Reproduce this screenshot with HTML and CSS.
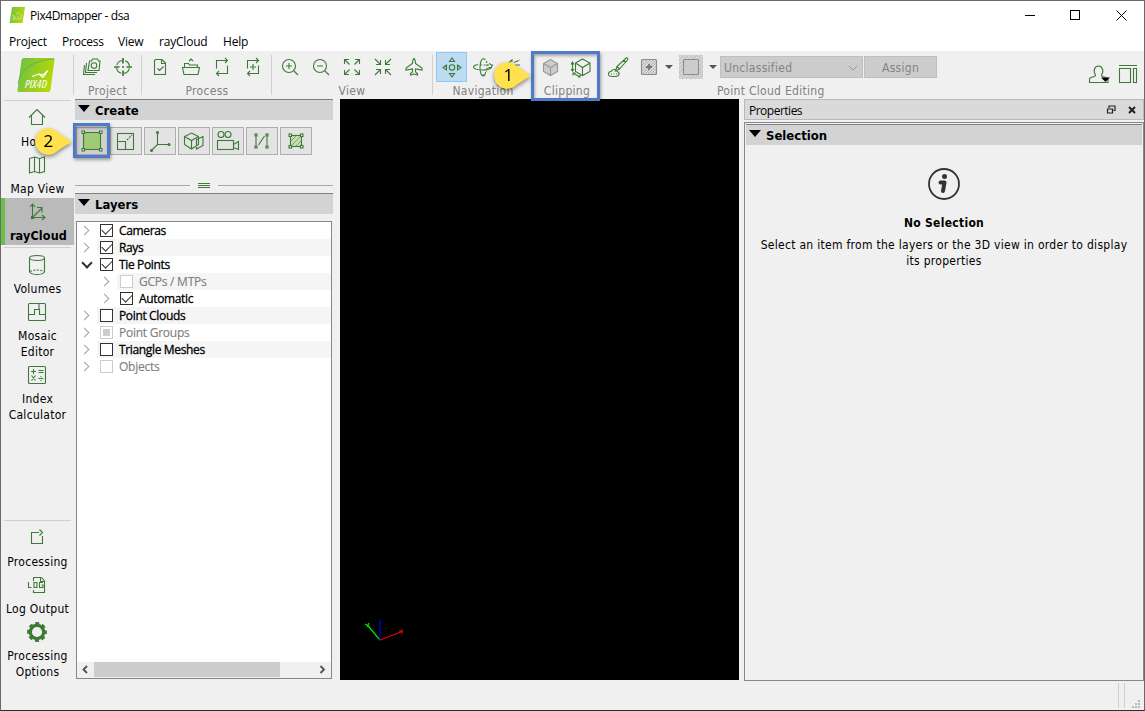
FILE: index.html
```
<!DOCTYPE html>
<html lang="en">
<head>
    <meta charset="UTF-8">
    <meta name="viewport" content="width=device-width, initial-scale=1.0">
    <title>Pix4Dmapper - dsa</title>
    <link rel="stylesheet" href="styles.css">
</head>
<body>
<div class="window">
    <header class="titlebar">
        <svg class="app-icon" width="16" height="16" viewBox="0 0 16 16">
            <defs>
                <linearGradient id="logoGreen" x1="0" y1="0" x2="1" y2="0.3">
                    <stop offset="0" stop-color="#6cbf45"/>
                    <stop offset="1" stop-color="#b5d70b"/>
                </linearGradient>
            </defs>
            <path d="M3 0H16L13.500 16H0.500Z" fill="url(#logoGreen)"/>
            <path d="M3 8.500h1.500v3.500M6 9v3M8 9l2 3M12 7v5M3 12h9M7 7l4-2" stroke="#d8eeb0" stroke-width="0.600" fill="none"/>
        </svg>
        <span class="window-title">Pix4Dmapper - dsa</span>
        <div class="window-buttons">
            <svg width="46" height="29" viewBox="0 0 46 29"><path d="M18 14.500h10"/></svg>
            <svg width="46" height="29" viewBox="0 0 46 29"><rect x="17.500" y="9.500" width="9" height="9"/></svg>
            <svg width="46" height="29" viewBox="0 0 46 29"><path d="M17.500 9.500l10 10M27.500 9.500l-10 10"/></svg>
        </div>
    </header>

    <nav class="menubar">
        <span class="menu-project">Project</span>
        <span class="menu-process">Process</span>
        <span class="menu-view">View</span>
        <span class="menu-raycloud">rayCloud</span>
        <span>Help</span>
    </nav>

    <div class="toolbar">
        <div class="logo">
            <svg width="40" height="36" viewBox="0 0 40 36">
                <path d="M8 1H37Q39 1 38.500 3L34.500 33Q34 35 32 35H3Q1 35 1.500 33L5.500 3Q6 1 8 1Z" fill="url(#logoGreen)"/>
                <path d="M2 27C4 13 17 3 38 2" stroke="#49a05c" stroke-width="0.600" fill="none"/>
                <path d="M16 19.500L23 17L27 18L32 13.500L27 20.500M23 17L27 20.500" stroke="#fff" stroke-width="1.100" fill="none"/>
                <text x="9" y="30.500" class="logo-text" textLength="22" lengthAdjust="spacingAndGlyphs">PIX4D</text>
            </svg>
        </div>

        <div class="tool-group group-project">
            <div class="tools">
                <div class="tool"><svg class="icon" viewBox="0 0 24 24"><path d="M9.500 6h2l1-2h5l1 2h1.500l-1 9.500h-11zM6.500 8l-1 9.500h11.500M4.500 10l-1 9.500h11.500"/><circle cx="14" cy="10.500" r="2.800"/></svg></div>
                <div class="tool"><svg class="icon" viewBox="0 0 24 24"><circle cx="12" cy="12" r="6.500" stroke-dasharray="7.200 3.010" stroke-dashoffset="-1.500"/><path d="M12 3v5.500M12 15.500v5.500M3 12h5.500M15.500 12h5.500M11 12h2" stroke-width="1.700"/></svg></div>
            </div>
            <div class="tool-label">Project</div>
        </div>

        <div class="tool-group group-process">
            <div class="tools">
                <div class="tool"><svg class="icon" viewBox="0 0 24 24"><path d="M7.500 4.500h6.500l3.500 3.500v11.500h-11v-14zM13.500 4.500v4h4M9.500 13.500l2 2 4-4"/></svg></div>
                <div class="tool"><svg class="icon" viewBox="0 0 24 24"><path d="M3.500 12.500h17l-1.500 7h-14zM5.500 12v-3.500h4l1 1.500h8v2M10 6l2-2 2 2"/></svg></div>
                <div class="tool"><svg class="icon" viewBox="0 0 24 24"><path d="M6.500 13.500v-8h11M15 3l2.500 2.500-2.500 2.500M17.500 10.500v8h-11M9 16l-2.500 2.500 2.500 2.500"/></svg></div>
                <div class="tool"><svg class="icon" viewBox="0 0 24 24"><path d="M6.500 13.500v-8h11M15 3l2.500 2.500-2.500 2.500M17.500 10.500v8h-11M9 16l-2.500 2.500 2.500 2.500M12 9v6M9 12h6"/></svg></div>
            </div>
            <div class="tool-label">Process</div>
        </div>

        <div class="tool-group group-view">
            <div class="tools">
                <div class="tool"><svg class="icon" viewBox="0 0 24 24"><circle cx="11" cy="11" r="6.500"/><path d="M16 16l4 4M8 11h6M11 8v6"/></svg></div>
                <div class="tool"><svg class="icon" viewBox="0 0 24 24"><circle cx="11" cy="11" r="6.500"/><path d="M16 16l4 4M8 11h6"/></svg></div>
                <div class="tool"><svg class="icon" viewBox="0 0 24 24"><path d="M9 4.500H4.500V9M15 4.500h4.500V9M9 19.500H4.500V15M15 19.500h4.500V15M4.500 4.500l5 5M19.500 4.500l-5 5M4.500 19.500l5-5M19.500 19.500l-5-5"/></svg></div>
                <div class="tool"><svg class="icon" viewBox="0 0 24 24"><path d="M5 9.500h4.500V5M19 9.500h-4.500V5M5 14.500h4.500V19M19 14.500h-4.500V19M4 4l5.500 5.500M20 4l-5.500 5.500M4 20l5.500-5.500M20 20l-5.500-5.500"/></svg></div>
                <div class="tool"><svg class="icon" viewBox="0 0 24 24"><path d="M12 3.500q1.500 1 1.500 5l6.500 4.500v2l-6.500-1v3l2 1.500v1.500l-3.500-1-3.500 1v-1.500l2-1.500v-3l-6.500 1v-2l6.500-4.500q0-4 1.500-5z"/></svg></div>
            </div>
            <div class="tool-label">View</div>
        </div>

        <div class="tool-group group-navigation">
            <div class="tools">
                <div class="tool active"><svg class="icon" viewBox="0 0 24 24"><circle cx="12" cy="12.500" r="2.700"/><path d="M9.500 6.500h5l-2.500-3.500zM9.500 18.500h5l-2.500 3.500zM6.500 10v5l-3.500-2.500zM17.500 10v5l3.500-2.500z"/></svg></div>
                <div class="tool"><svg class="icon" viewBox="0 0 24 24"><path d="M7 9.500q-5 1-4.500 3 2 2.500 9 2.500 6 0 9-2.500M18 8.500q4 1.500 2.500 4l-3 0M20.500 12.500l1-3M14.500 5q-2.500-3-4.500 1-2 6.500 0 13 2 3.500 4 1M14 20l.5-3M14 20l-3 0"/><path d="M9 10h9M15.500 6q1 5 0 11" stroke-dasharray="2 1.500"/></svg></div>
                <div class="tool"><svg class="icon" viewBox="0 0 24 24"><path d="M3 10.500l7-5.500v6.500zM8 7q-1.500 2 0 4M12 7.500l6-2.500M13 10h5M12 12l6 2.500" stroke-dasharray="5 1"/></svg></div>
            </div>
            <div class="tool-label">Navigation</div>
        </div>

        <div class="tool-group group-clipping">
            <div class="tools">
                <div class="tool"><svg class="icon" viewBox="0 0 24 24"><path d="M11.500 4.500l7 4v8l-7 4-7-4v-8z" fill="#ccc" stroke="#999"/><path d="M4.500 8.500l7 4 7-4M11.500 12.500v8" stroke="#999"/></svg></div>
                <div class="tool"><svg class="icon" viewBox="0 0 24 24"><path d="M12.500 4l7.500 4v8.500l-7.500 4-7-4V8zM5.500 8l7 4.500L20 8M12.500 12.500v8M2.500 7.500v8M1 9.500l1.500-2.500 1.500 2.500M1 14l1.500 2 1.500-2M3 18l7 4M3 20.500v-2.500h2.500M8 22h2v-2"/></svg></div>
            </div>
            <div class="tool-label">Clipping</div>
            <div class="highlight highlight-clipping"></div>
            <svg class="callout callout-one" width="44" height="36" viewBox="0 0 44 36">
                <path d="M26 8.500A13.200 13.200 0 1 0 26 26.500L40 17.500Z"/>
                <text x="17.500" y="22.500">1</text>
            </svg>
        </div>

        <div class="tool-group group-editing">
            <div class="tools">
                <div class="tool brush"><svg class="icon" viewBox="0 0 24 24"><path d="M11 11.500l2.500 2.500 8-9q1-2.500-1.500-2zM11 11.500l-1.500 4.500 4-2M17.500 5l2.500 2.500M6 21.500q-3.500 0-3.500-2.500t2.500-2.500q1-2 3.500-2t2.500 2q2.500.5 2 3-.5 2-3 2zM5 19h1M7.500 19h1M10 19h1"/></svg></div>
                <div class="tool add-points"><svg class="icon gray" viewBox="0 0 24 24">
                    <defs><pattern id="hatch" width="3" height="3" patternUnits="userSpaceOnUse"><rect width="3" height="3" fill="#dcdcdc" stroke="none"/><path d="M0 3L3 0" stroke="#aaa" stroke-width="0.900"/></pattern></defs>
                    <rect x="4.500" y="4.500" width="15" height="15" rx="1" fill="url(#hatch)"/><path d="M12 9v6M9 12h6" stroke-width="1.800" stroke="#777"/></svg></div>
                <span class="arrow"></span>
                <div class="tool square-select"><svg class="icon gray" viewBox="0 0 24 24"><rect x="4.500" y="4.500" width="15" height="15" rx="1" fill="#ccc"/></svg></div>
                <span class="arrow"></span>
                <div class="combo"><span>Unclassified</span><svg width="10" height="6" viewBox="0 0 10 6"><path d="M1 1l4 4 4-4"/></svg></div>
                <button class="assign" disabled>Assign</button>
            </div>
            <div class="tool-label">Point Cloud Editing</div>
        </div>

        <div class="toolbar-right">
            <svg class="icon" width="24" height="24" viewBox="0 0 24 24"><path d="M2.500 20.500v-3q0-2 3-2.500 3-.5 3-2-2-2.500-1-6 1-3 4-3t4 3q1 3.500-1 6 0 1.500 3 2 3.500.5 3.500 3v2.500z"/><path d="M14 15.500h9l-4.500 4.500z" fill="#000" stroke="none"/></svg>
            <svg class="icon" width="24" height="24" viewBox="0 0 24 24"><path d="M3 3.500h18M3.500 6.500h11v14h-11zM17.500 6.500h3v14h-3z"/></svg>
        </div>
    </div>

    <div class="main">
        <aside class="sidebar">
            <div class="side-line"></div>
            <div class="side-item home"><svg class="icon" viewBox="0 0 24 24"><path d="M4 11.500l8-8 8 8M6.500 9.500v9h11v-9"/></svg>Home</div>
            <div class="side-item"><svg class="icon" viewBox="0 0 24 24"><path d="M4.500 5.500l5-1.500 5 1.500 5-1.500v14.500l-5 1.500-5-1.500-5 1.500zM9.500 4v14.500M14.500 5.500v14.500"/></svg>Map View</div>
            <div class="side-item selected"><svg class="icon" viewBox="0 0 24 24"><path d="M7.500 4v13.500h12M5 7l2.500-3 2.500 3M17 15l3 2.500-3 2.500M9 16l7.500-7.500M12 7.500h5v5"/><rect x="6.500" y="16.500" width="2" height="2"/></svg>rayCloud</div>
            <div class="side-line inner-line"></div>
            <div class="side-item volumes"><svg class="icon" viewBox="0 0 24 24"><ellipse cx="12" cy="5" rx="7.500" ry="2.500"/><path d="M4.500 5v14q2 2.500 7.500 2.500t7.500-2.500V5"/><path d="M5 18.500q7-3 14 0" stroke-dasharray="2 1.500"/></svg>Volumes</div>
            <div class="side-item"><svg class="icon" viewBox="0 0 24 24"><rect x="3.500" y="3.500" width="17" height="17" rx="1"/><path d="M4 14.500h5.500v-5H14v-6M14.500 9v5.500h6"/></svg>Mosaic<br>Editor</div>
            <div class="side-item"><svg class="icon" viewBox="0 0 24 24"><rect x="3.500" y="3.500" width="17" height="17" rx="1"/><path d="M6 8.500h5M8.500 6v5M13.500 7.500h5M13.500 9.500h5M6.500 12.500l4 5M10.500 12.500l-4 5M13.500 15.500h5M16 13v1M16 17v1"/></svg>Index<br>Calculator</div>

            <div class="side-line bottom-line"></div>
            <div class="side-item processing"><svg class="icon" viewBox="0 0 24 24"><path d="M14 6.500H6.500v11h11V10M14.500 3.500l3 3-3 3"/></svg>Processing</div>
            <div class="side-item"><svg class="icon" viewBox="0 0 24 24"><path d="M8.500 8V4.500h8l3 3.500v11.500h-11V17M15.500 4.500v4h4M3.500 9v5.500h3M9 9.500h3v5H9zM18 9.500h-3.500v5H18v-2.500h-1.500"/></svg>Log Output</div>
            <div class="side-item"><svg class="icon" viewBox="0 0 24 24"><circle cx="12" cy="12" r="6.700" stroke-width="3.200"/><circle cx="12" cy="12" r="8.600" stroke-width="2.600" stroke-dasharray="4 2.754" stroke-dashoffset="2"/></svg>Processing<br>Options</div>
        </aside>

        <section class="left-panel">
            <div class="section-head"><span class="triangle"></span>Create</div>
            <div class="create-buttons">
                <div class="create-btn first"><svg class="icon" viewBox="0 0 24 24"><rect x="3.500" y="3.500" width="17" height="17" fill="#9fca78"/><g fill="#eee"><rect x="2" y="2" width="2.500" height="2.500"/><rect x="19.500" y="2" width="2.500" height="2.500"/><rect x="2" y="19.500" width="2.500" height="2.500"/><rect x="19.500" y="19.500" width="2.500" height="2.500"/></g></svg>
                    <div class="highlight highlight-create"></div>
                </div>
                <div class="create-btn"><svg class="icon" viewBox="0 0 24 24"><rect x="3.500" y="4.500" width="16" height="16"/><path d="M3.500 12.500h8v8"/><path d="M13 11l5-5" stroke-dasharray="2 1"/></svg></div>
                <div class="create-btn"><svg class="icon" viewBox="0 0 24 24"><path d="M9.500 3v12.500h12M9.500 15.500l-6 6"/><g fill="#3c7a35" stroke="none"><circle cx="9.500" cy="3.500" r="1.500"/><circle cx="21" cy="15.500" r="1.500"/><circle cx="3.500" cy="21.500" r="1.500"/></g></svg></div>
                <div class="create-btn"><svg class="icon" viewBox="0 0 24 24"><path d="M9.500 4l7 3.500v8l-7 4.500-7-4.500v-8zM2.500 7.500l7 4 7-4M9.500 11.500v8.500M14.500 10.500l6.500-3v9l-6.500 3.500zM18 9l3-1.500"/></svg></div>
                <div class="create-btn"><svg class="icon" viewBox="0 0 24 24"><circle cx="5" cy="5.500" r="3"/><circle cx="12" cy="5.500" r="3"/><rect x="1.500" y="11.500" width="16" height="9"/><path d="M17.500 15.500l5-3v8l-5-2"/></svg></div>
                <div class="create-btn"><svg class="icon" viewBox="0 0 24 24"><path d="M6 7.500v9M17 7.500v9M8.500 16l6-9"/><rect x="5" y="5" width="2" height="2"/><rect x="16" y="5" width="2" height="2"/><rect x="5" y="17" width="2" height="2"/><rect x="16" y="17" width="2" height="2"/></svg></div>
                <div class="create-btn"><svg class="icon" viewBox="0 0 24 24"><rect x="6.500" y="6.500" width="11" height="11" fill="#c5dfb3"/><path d="M7 12l5-5M7 17l10-10M12 17l5-5" stroke-width="0.800" opacity="0.700"/><g fill="#eee"><rect x="5" y="5" width="2.500" height="2.500"/><rect x="16.500" y="5" width="2.500" height="2.500"/><rect x="5" y="16.500" width="2.500" height="2.500"/><rect x="16.500" y="16.500" width="2.500" height="2.500"/></g></svg></div>
            </div>
            <svg class="callout callout-two" width="44" height="36" viewBox="0 0 44 36">
                <path d="M26 8.500A13.200 13.200 0 1 0 26 26.500L40 17.500Z"/>
                <text x="16.500" y="22.500">2</text>
            </svg>
            <div class="splitter"><span class="split-line"></span><span class="grip"></span><span class="split-line"></span></div>
            <div class="section-head"><span class="triangle"></span>Layers</div>
            <div class="tree">
                <div class="tree-row"><span class="chevron"></span><div class="node"><span class="check checked"></span>Cameras</div></div>
                <div class="tree-row alt"><span class="chevron"></span><div class="node"><span class="check checked"></span>Rays</div></div>
                <div class="tree-row"><span class="chevron open"></span><div class="node"><span class="check checked"></span>Tie Points</div></div>
                <div class="tree-row alt child disabled"><span class="chevron"></span><div class="node"><span class="check"></span>GCPs / MTPs</div></div>
                <div class="tree-row child"><span class="chevron"></span><div class="node"><span class="check checked"></span>Automatic</div></div>
                <div class="tree-row alt"><span class="chevron"></span><div class="node"><span class="check"></span>Point Clouds</div></div>
                <div class="tree-row disabled"><span class="chevron"></span><div class="node"><span class="check partial"></span>Point Groups</div></div>
                <div class="tree-row alt"><span class="chevron"></span><div class="node"><span class="check"></span>Triangle Meshes</div></div>
                <div class="tree-row disabled"><span class="chevron"></span><div class="node"><span class="check"></span>Objects</div></div>
                <div class="scrollbar">
                    <svg width="17" height="16" viewBox="0 0 17 16"><path d="M10 4l-3.500 3.500 3.500 3.500"/></svg>
                    <span class="thumb"></span>
                    <svg width="17" height="16" viewBox="0 0 17 16"><path d="M6.500 4l3.500 3.500-3.500 3.500"/></svg>
                </div>
            </div>
        </section>

        <section class="viewport">
            <!-- 3D axes -->
            <svg width="44" height="26" viewBox="0 0 44 26">
                <path d="M17 21L5.500 7.500M2 5l5 3M6 4l-2 4" stroke="#00e000"/>
                <path d="M17 21V4M15.500 4h3M17 1v2" stroke="#0000f0"/>
                <path d="M17 21L39 12.500M36 12h4M39 10.500v4" stroke="#f00000"/>
            </svg>
        </section>

        <section class="properties">
            <div class="dock-title">
                <span>Properties</span>
                <svg width="34" height="12" viewBox="0 0 34 12">
                    <path d="M3 4V2h6v4.500H7.500" stroke="#222" stroke-width="1.200" fill="none"/>
                    <path d="M1.500 5h5v4h-5z" stroke="#222" stroke-width="1.200" fill="none"/>
                    <path d="M23 3l6 6M29 3l-6 6" stroke="#222" stroke-width="2" fill="none"/>
                </svg>
            </div>
            <div class="dock-body">
                <div class="section-head"><span class="triangle"></span>Selection</div>
                <div class="no-selection">
                    <svg width="34" height="34" viewBox="0 0 34 34">
                        <circle cx="17" cy="17" r="15" fill="none" stroke="#333" stroke-width="1.800"/>
                        <circle cx="17.500" cy="9.500" r="2.500" fill="#333"/>
                        <path d="M13.500 15.500h4l-1.500 8.500" fill="none" stroke="#333" stroke-width="4" stroke-linecap="round" stroke-linejoin="round"/>
                    </svg>
                    <h2>No Selection</h2>
                    <p>Select an item from the layers or the 3D view in order to display<br>its properties</p>
                </div>
            </div>
        </section>
    </div>

    <footer class="statusbar">
        <span class="status-sep"></span>
        <span class="status-sep"></span>
        <svg width="8" height="8" viewBox="0 0 8 8"><path d="M6 0h2v2H6zM3 3h2v2H3zM6 3h2v2H6zM0 6h2v2H0zM3 6h2v2H3zM6 6h2v2H6z" fill="#b8b8b8"/></svg>
    </footer>
</div>
</body>
</html>
```
FILE: styles.css
```
/* General Reset */
* {
    margin: 0;
    padding: 0;
    box-sizing: border-box;
}

body {
    font-family: "DejaVu Sans Condensed", "DejaVu Sans", sans-serif;
    font-stretch: condensed;
    font-size: 12px;
    letter-spacing: 0.29px;
    color: #000;
    overflow: hidden;
}

svg {
    display: block;
    flex: none;
}

.window {
    width: 1145px;
    height: 711px;
    display: flex;
    flex-direction: column;
    background-color: #f0f0f0;
    border: 1px solid #6b6b6b;
    border-bottom-color: #2e2c2c;
}

/* Title bar */
.titlebar {
    height: 30px;
    flex: none;
    display: flex;
    align-items: center;
    padding: 0 0 2px 8px;
    background-color: #fff;
    font-family: "Open Sans", sans-serif;
    font-stretch: normal;
    letter-spacing: -0.4px;
}

.window-title {
    margin-left: 5px;
}

.window-buttons {
    display: flex;
    margin-left: auto;
    margin-right: -1px;
}

.window-buttons path,
.window-buttons rect {
    fill: none;
    stroke: #000;
}

/* Menu */
.menubar {
    height: 20px;
    flex: none;
    display: flex;
    align-items: center;
    padding-left: 8px;
    background-color: #fff;
    font-family: "Open Sans", sans-serif;
    font-stretch: normal;
    letter-spacing: -0.2px;
}

.menu-project { width: 53px; }
.menu-process { width: 56px; }
.menu-view { width: 41px; }
.menu-raycloud { width: 64px; }

/* Toolbar */
.icon {
    width: 24px;
    height: 24px;
    fill: none;
    stroke: #3c7a35;
    stroke-width: 1.1;
}

.icon.gray {
    stroke: #8c8c8c;
}

.toolbar {
    height: 48px;
    flex: none;
    display: flex;
}

.logo {
    width: 72px;
    padding: 6px 0 0 15px;
}

.logo-text {
    font-family: "Open Sans", sans-serif;
    font-size: 10.5px;
    font-style: italic;
    letter-spacing: 0;
    fill: #fff;
}

.tool-group {
    position: relative;
    display: flex;
    flex-direction: column;
    align-items: center;
}

.group-project,
.group-process,
.group-view,
.group-navigation {
    background: linear-gradient(#d0d0d0, #d0d0d0) no-repeat 0 4px / 1px 40px;
}

.group-project { width: 68px; }
.group-process { width: 130px; padding-left: 1px; }
.group-view { width: 161px; }
.group-navigation { width: 100px; padding-left: 1px; }
.group-clipping { width: 67px; padding-left: 2px; }
.group-editing { width: 340px; align-items: flex-start; }

.tools {
    display: flex;
    align-items: center;
    height: 31px;
}

.tool {
    width: 31px;
    height: 31px;
    display: flex;
    align-items: center;
    justify-content: center;
}

.tool.active {
    height: 30px;
    background-color: #bddcf4;
    border: 1px solid #90c8f6;
}

.tool-label {
    height: 16px;
    line-height: 18px;
    padding-left: 1px;
    color: #808080;
}

.brush {
    margin-left: 3px;
}

.add-points {
    width: 32px;
}

.square-select {
    width: 24px;
    height: 24px;
    margin: 0 6px 0 6px;
    background: repeating-linear-gradient(135deg, #c8c8c8 0 1.5px, #d6d6d6 1.5px 3px);
}

.arrow {
    border: 4px solid transparent;
    border-top-color: #555;
    border-bottom: 0;
}

.combo {
    width: 143px;
    height: 22px;
    display: flex;
    align-items: center;
    justify-content: space-between;
    margin: 0 1px 0 3px;
    padding: 2px 4px 0 3px;
    background-color: #ccc;
    border: 1px solid #bfbfbf;
    color: #838383;
}

.combo path {
    fill: none;
    stroke: #999;
}

.assign {
    width: 73px;
    height: 22px;
    padding-top: 2px;
    background-color: #ccc;
    border: 1px solid #bfbfbf;
    color: #838383;
    font: inherit;
    letter-spacing: inherit;
}

.group-editing .tool-label {
    margin-left: 117px;
}

.toolbar-right {
    display: flex;
    gap: 5px;
    margin-left: auto;
    padding: 11px 4px 0 0;
}

/* Callouts */
.highlight {
    position: absolute;
    z-index: 2;
    border: 3px solid #4f7ac7;
    box-shadow: 1px 2px 3px rgba(0, 0, 0, 0.35), inset 1px 2px 3px rgba(0, 0, 0, 0.3);
}

.highlight-clipping {
    left: -1px;
    top: 0;
    width: 69px;
    height: 50px;
}

.highlight-create {
    left: -4px;
    top: -5px;
    width: 37px;
    height: 35px;
}

.callout {
    position: absolute;
    z-index: 3;
    filter: drop-shadow(0 2px 2px rgba(0, 0, 0, 0.45));
}

.callout path {
    fill: #ffe14d;
}

.callout text {
    font-family: "Noto Sans", sans-serif;
    font-stretch: normal;
    font-size: 17px;
    text-anchor: middle;
}

.callout-one {
    left: -41px;
    top: 7px;
}

.callout-two {
    left: -43px;
    top: 25px;
}

/* Main area */
.main {
    height: 582px;
    flex: none;
    display: flex;
}

.sidebar {
    width: 73px;
    display: flex;
    flex-direction: column;
}

.side-line {
    height: 1px;
    margin: 1px 3px 3px;
    background-color: #cfcfcf;
}

.inner-line {
    margin: 2px 3px 3px;
}

.bottom-line {
    margin-top: auto;
}

.side-item {
    padding: 2px 0 1px;
    line-height: 16px;
    text-align: center;
}

.side-item .icon {
    margin: 0 0 4px 24px;
}

.side-item.selected {
    border-left: 4px solid #6cc04a;
    padding-right: 2px;
    background-color: #bababa;
    font-size: 12.5px;
    font-weight: bold;
    letter-spacing: 0.15px;
}

.side-item.selected .icon {
    margin-left: 20px;
}

.left-panel {
    position: relative;
    width: 258px;
    margin-left: 1px;
}

.section-head {
    height: 21px;
    display: flex;
    align-items: center;
    padding-left: 3px;
    background-color: #d3d3d3;
    border-top: 1px solid #808080;
    font-size: 13px;
    font-weight: bold;
    letter-spacing: 0;
}

.triangle {
    margin: -3px 5px 0 0;
    border: 6.5px solid transparent;
    border-top: 7px solid #000;
    border-bottom: 0;
}

.create-buttons {
    display: flex;
    gap: 2px;
    height: 57px;
    padding: 7px 0 0 1px;
}

.create-btn {
    position: relative;
    width: 32px;
    height: 28px;
    display: flex;
    align-items: center;
    justify-content: center;
    background-color: #e3e3e3;
    border: 1px solid #adadad;
}

.create-btn.first {
    background-color: #d0d0d0;
}

.splitter {
    display: flex;
    align-items: center;
    justify-content: space-between;
    height: 16px;
}

.split-line {
    width: 115px;
    height: 1px;
    background-color: #a8a8a8;
}

.grip {
    width: 12px;
    height: 5px;
    border-top: 1px solid #3c7a35;
    border-bottom: 1px solid #3c7a35;
    background: linear-gradient(#3c7a35, #3c7a35) no-repeat 0 1px / 12px 1px;
}

/* Layer tree */
.tree {
    display: flex;
    flex-direction: column;
    width: 256px;
    height: 458px;
    margin: 7px 0 0 1px;
    background-color: #fff;
    border: 1px solid #828790;
    font-family: "Open Sans", sans-serif;
    font-stretch: normal;
    letter-spacing: -0.35px;
}

.tree-row {
    display: flex;
    height: 17px;
}

.tree-row.child {
    padding-left: 20px;
}

.node {
    flex: 1;
    display: flex;
    align-items: center;
    padding-left: 3px;
    -webkit-text-stroke: 0.3px #000;
}

.alt .node {
    background-color: #f5f5f5;
}

.chevron {
    width: 20px;
    display: flex;
    align-items: center;
    padding-left: 4px;
}

.chevron::before {
    content: "";
    width: 6px;
    height: 6px;
    border: solid #a0a0a0;
    border-width: 1.5px 1.5px 0 0;
    transform: rotate(45deg);
}

.chevron.open::before {
    margin: -4px 0 0 2px;
    border-color: #333;
    border-width: 2px 2px 0 0;
    transform: rotate(135deg);
}

.check {
    width: 13px;
    height: 13px;
    display: flex;
    align-items: center;
    justify-content: center;
    margin-right: 6px;
    background-color: #fff;
    border: 1px solid #333;
}

.check.checked::before {
    content: "";
    width: 9px;
    height: 5px;
    margin-top: -3px;
    border: solid #333;
    border-width: 0 0 1.3px 1.3px;
    transform: rotate(-45deg);
}

.check.partial::before {
    content: "";
    width: 7px;
    height: 7px;
    background-color: #ccc;
}

.disabled .check {
    border-color: #ccc;
}

.disabled .node {
    color: #808080;
    -webkit-text-stroke: 0.15px #808080;
    letter-spacing: -0.25px;
}

.scrollbar {
    display: flex;
    height: 16px;
    margin-top: auto;
    background-color: #f0f0f0;
}

.scrollbar path {
    fill: none;
    stroke: #505050;
    stroke-width: 1.8;
}

.thumb {
    width: 186px;
    height: 15px;
    margin-right: auto;
    background-color: #cdcdcd;
}

/* 3D view */
.viewport {
    display: flex;
    align-items: flex-end;
    width: 399px;
    height: 581px;
    margin-left: 7px;
    padding: 0 0 35px 23px;
    background-color: #000;
}

.viewport svg {
    fill: none;
    stroke-width: 1.2;
}

/* Properties dock */
.properties {
    width: 400px;
    margin-left: 5px;
}

.dock-title {
    display: flex;
    align-items: center;
    justify-content: space-between;
    height: 21px;
    padding: 1px 3px 0 4px;
    background-color: #dadada;
    border: 1px solid #b9b9b9;
    font-family: "Open Sans", sans-serif;
    font-stretch: normal;
    letter-spacing: -0.5px;
}

.dock-body {
    height: 559px;
    margin-top: 2px;
    padding: 1px;
    border: 1px solid #828790;
}

.no-selection {
    display: flex;
    flex-direction: column;
    align-items: center;
    padding-top: 22px;
    text-align: center;
    line-height: 16px;
}

.no-selection h2 {
    margin: 14px 0 6px;
    font-size: 12px;
}

/* Status bar */
.statusbar {
    display: flex;
    flex: 1;
    justify-content: flex-end;
    padding: 2px 4px 2px 0;
}

.status-sep {
    width: 1px;
    margin-right: 5px;
    background-color: #d0d0d0;
}

.statusbar svg {
    margin: auto 0 0 2px;
}
```
